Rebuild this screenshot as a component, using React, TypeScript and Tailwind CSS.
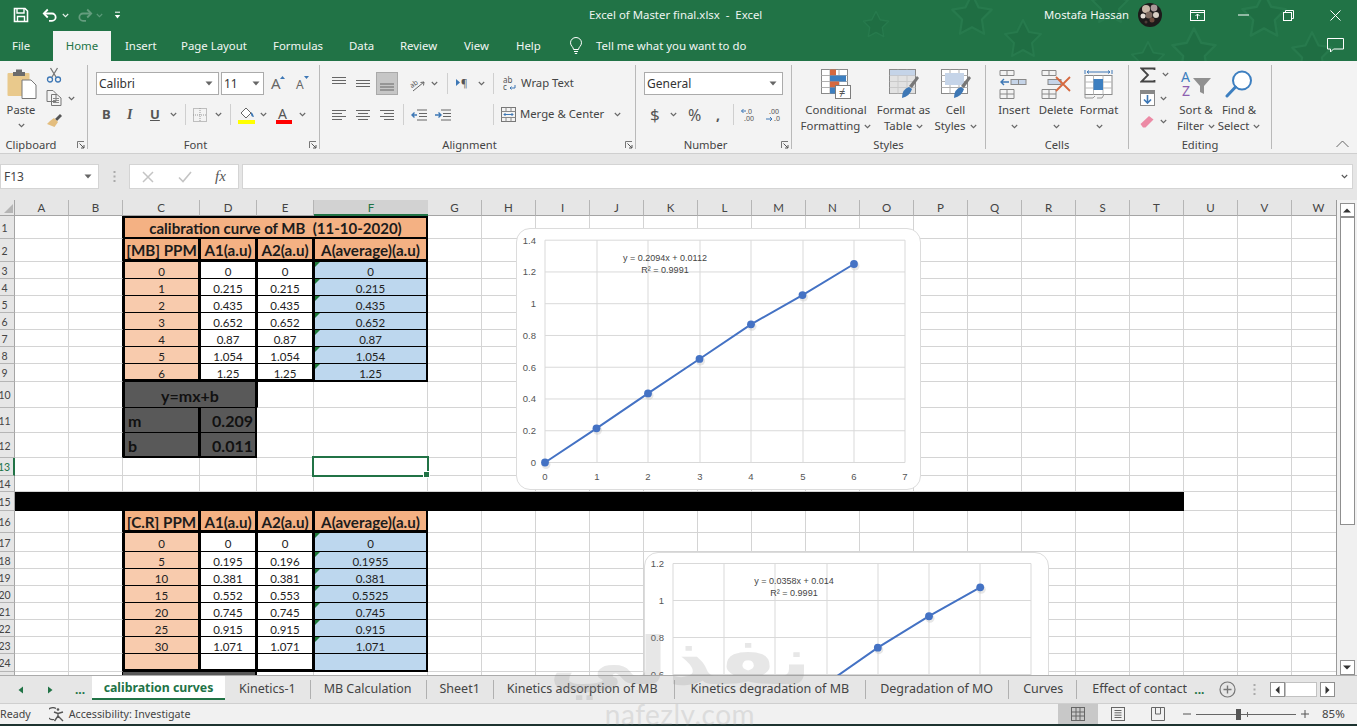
import React from "react";

function Chev({ className = "", color = "#666" }: { className?: string; color?: string }) {
  return (
    <svg width="7" height="5" viewBox="0 0 7 5" className={"shrink-0 " + className}>
      <path d="M0.8 1 L3.5 3.7 L6.2 1" fill="none" stroke={color} strokeWidth="1.1" />
    </svg>
  );
}

function DropTri({ className = "" }: { className?: string }) {
  return (
    <svg width="8" height="5" viewBox="0 0 8 5" className={"shrink-0 " + className}>
      <path d="M0.5 0.5 H7.5 L4 4.5 Z" fill="#666" />
    </svg>
  );
}

function Launcher() {
  return (
    <svg width="8" height="8" viewBox="0 0 8 8" className="absolute right-[2px] bottom-[4px]">
      <path d="M0.5 7 V0.5 H7" fill="none" stroke="#777" strokeWidth="1" />
      <path d="M2.5 2.5 L7 7 M7 4 V7 H4" fill="none" stroke="#555" strokeWidth="1" />
    </svg>
  );
}

function Sep() {
  return <div className="w-px h-[84px] bg-[#b9b9b9] shrink-0" />;
}
function SmallSep({ className = "" }: { className?: string }) {
  return <div className={"w-px h-[21px] bg-[#cfcfcf] shrink-0 " + className} />;
}

function Group({ w, label, launcher, labelClass = "", children }: { w: string; label: string; launcher?: boolean; labelClass?: string; children: React.ReactNode }) {
  return (
    <div className={"relative flex flex-col h-[88px] shrink-0 " + w}>
      <div className="flex-1 min-h-0">{children}</div>
      <div className={"h-[16px] leading-[16px] text-center text-[11.2px] text-[#444] " + labelClass}>{label}</div>
      {launcher && <Launcher />}
    </div>
  );
}

function LargeBtn({ w, icon, l1, l2, chevInline }: { w: string; icon: React.ReactNode; l1: string; l2?: string; chevInline?: boolean }) {
  return (
    <div className={"flex flex-col items-center pt-[4px] shrink-0 " + w}>
      <div className="h-[30px] flex items-center justify-center">{icon}</div>
      <div className="mt-[3px] text-[11.4px] leading-[16px] text-[#444] text-center whitespace-nowrap">{l1}</div>
      <div className="h-[16px] text-[11.4px] leading-[16px] text-[#444] flex items-center justify-center gap-[4px] whitespace-nowrap">
        {l2 && <span>{l2}</span>}
        {chevInline && <Chev />}
      </div>
    </div>
  );
}

function Lines({ kind }: { kind: "left" | "center" | "right" }) {
  const rows = kind === "left"
    ? [[0, 14], [0, 10], [0, 14], [0, 10]]
    : kind === "center"
    ? [[0, 14], [2, 12], [0, 14], [2, 12]]
    : [[0, 14], [4, 14], [0, 14], [4, 14]];
  return (
    <svg width="15" height="12" viewBox="0 0 15 12">
      {rows.map((r, i) => (
        <path key={i} d={`M${r[0]} ${1.5 + i * 3} H${r[1]}`} stroke="#666" strokeWidth="1" />
      ))}
    </svg>
  );
}

function TopLines({ y }: { y: number }) {
  return (
    <svg width="15" height="14" viewBox="0 0 15 14">
      {[0, 1, 2].map((i) => (
        <path key={i} d={`M0 ${y + i * 3} H14`} stroke="#666" strokeWidth="1" />
      ))}
    </svg>
  );
}

function Grid3({ size = 30, children }: { size?: number; children: React.ReactNode }) {
  return (
    <svg width={size} height="30" viewBox={`0 0 ${size} 30`}>
      {children}
    </svg>
  );
}

function TitleBar() {
  return (
    <div className="relative h-[30px] flex items-center shrink-0 text-white">
      <svg width="16" height="16" viewBox="0 0 16 16" className="ml-[13px]">
        <path d="M1.5 1.5 H12 L14.5 4 V14.5 H1.5 Z" fill="none" stroke="#fff" strokeWidth="1.6" />
        <path d="M4 1.5 V6 H11 V1.5" fill="none" stroke="#fff" strokeWidth="1.4" />
        <path d="M4.5 14.5 V9.5 H11.5 V14.5" fill="none" stroke="#fff" strokeWidth="1.4" />
      </svg>
      <svg width="16" height="14" viewBox="0 0 16 14" className="ml-[13px]">
        <path d="M2 5.5 H10 A3.6 3.6 0 0 1 10 12.8 H7" fill="none" stroke="#fff" strokeWidth="1.8" />
        <path d="M5.8 1.5 L1.8 5.5 L5.8 9.5" fill="none" stroke="#fff" strokeWidth="1.8" />
      </svg>
      <Chev color="#e8f2ec" className="ml-[4px]" />
      <svg width="16" height="14" viewBox="0 0 16 14" className="ml-[8px] opacity-30">
        <path d="M14 5.5 H6 A3.6 3.6 0 0 0 6 12.8 H9" fill="none" stroke="#fff" strokeWidth="1.8" />
        <path d="M10.2 1.5 L14.2 5.5 L10.2 9.5" fill="none" stroke="#fff" strokeWidth="1.8" />
      </svg>
      <Chev color="#5c9a7a" className="ml-[3px]" />
      <svg width="7" height="9" viewBox="0 0 7 9" className="ml-[11px]">
        <path d="M1 1.2 H6" stroke="#fff" strokeWidth="1" />
        <path d="M0.8 4 H6.2 L3.5 7.5 Z" fill="#fff" />
      </svg>
      <div className="absolute left-[589px] top-[7px] text-[11.4px] leading-[16px] whitespace-pre text-[#eef5f1]">Excel of Master final.xlsx  -  Excel</div>
      <div className="ml-auto flex items-center">
        <span className="text-[11.3px] text-[#f2f7f4]">Mostafa Hassan</span>
        <svg width="24" height="24" viewBox="0 0 24 24" className="ml-[9px]">
          <defs>
            <clipPath id="av"><circle cx="12" cy="12" r="12" /></clipPath>
          </defs>
          <g clipPath="url(#av)">
            <rect width="24" height="24" fill="#1d1a1a" />
            <circle cx="8" cy="6" r="4" fill="#c9b8a8" />
            <circle cx="16" cy="5" r="3.4" fill="#a99" />
            <circle cx="11" cy="12" r="3.5" fill="#7d6a60" />
            <circle cx="18" cy="12" r="3" fill="#d8cfc4" />
            <circle cx="5" cy="13" r="2.5" fill="#e4ded6" />
            <circle cx="14" cy="17" r="2.5" fill="#6b4a3c" />
            <circle cx="8" cy="19" r="1.5" fill="#4a3a36" />
          </g>
        </svg>
        <svg width="15" height="12" viewBox="0 0 15 12" className="ml-[28px]">
          <rect x="0.5" y="1.5" width="14" height="10" fill="none" stroke="#fff" />
          <path d="M1 3.5 H14" stroke="#fff" />
          <path d="M7.5 10 V5 M5.5 7 L7.5 5 L9.5 7" fill="none" stroke="#fff" />
        </svg>
        <svg width="11" height="2" viewBox="0 0 11 2" className="ml-[33px]"><path d="M0 1 H11" stroke="#fff" /></svg>
        <svg width="11" height="11" viewBox="0 0 11 11" className="ml-[34px]">
          <rect x="0.5" y="2.5" width="8" height="8" fill="none" stroke="#fff" />
          <path d="M2.5 2 V0.5 H10.5 V8.5 H9" fill="none" stroke="#fff" />
        </svg>
        <svg width="11" height="11" viewBox="0 0 11 11" className="ml-[36px] mr-[16px]">
          <path d="M0.5 0.5 L10.5 10.5 M10.5 0.5 L0.5 10.5" stroke="#fff" />
        </svg>
      </div>
    </div>
  );
}

function Stars() {
  const star = "M20 2 L26 14 L38 16 L29 25 L31 38 L20 32 L9 38 L11 25 L2 16 L14 14 Z";
  const items = [
    [950, -8, 1.1], [1003, 18, 1], [1090, -16, 1], [1170, 26, 1.2], [1240, -10, 1.2], [1290, 30, 1.1], [862, 10, 0.7], [1130, 40, 0.9],
  ];
  return (
    <svg width="520" height="61" viewBox="837 0 520 61" className="absolute right-0 top-0 pointer-events-none">
      {items.map((s, i) => (
        <g key={i} transform={`translate(${s[0]} ${s[1]}) scale(${s[2]})`}>
          <path d={star} fill="#1f6e43" stroke="#277a4d" strokeWidth="2" strokeLinejoin="round" />
        </g>
      ))}
    </svg>
  );
}

function MenuRow() {
  const tab = "text-[11.4px] text-[#f2f7f4] whitespace-nowrap leading-[16px]";
  return (
    <div className="relative h-[31px] flex items-center shrink-0">
      <span className={tab + " ml-[12px] w-[41px]"}>File</span>
      <div className="w-[58px] self-stretch mt-[1px] bg-[#f3f3f3] flex items-center justify-center text-[11.4px] text-[#217346]">Home</div>
      <span className={tab + " ml-[14px] w-[29px]"}>Insert</span>
      <span className={tab + " ml-[27px] w-[65px]"}>Page Layout</span>
      <span className={tab + " ml-[27px] w-[49px]"}>Formulas</span>
      <span className={tab + " ml-[27px] w-[24px]"}>Data</span>
      <span className={tab + " ml-[27px] w-[37px]"}>Review</span>
      <span className={tab + " ml-[27px] w-[25px]"}>View</span>
      <span className={tab + " ml-[27px] w-[25px]"}>Help</span>
      <svg width="14" height="18" viewBox="0 0 14 18" className="ml-[28px]">
        <path d="M4.5 12.5 C4.5 10 1.5 9 1.5 5.8 A5.5 5.3 0 0 1 12.5 5.8 C12.5 9 9.5 10 9.5 12.5 Z" fill="none" stroke="#fff" />
        <path d="M5 14.5 H9 M5.8 16.5 H8.2" stroke="#fff" />
      </svg>
      <span className={tab + " ml-[13px]"}>Tell me what you want to do</span>
      <svg width="17" height="15" viewBox="0 0 17 15" className="ml-auto mr-[13px]">
        <path d="M0.5 0.5 H16.5 V11 H6.5 L3.5 14 V11 H0.5 Z" fill="none" stroke="#fff" />
      </svg>
    </div>
  );
}

function ClipboardGroup() {
  return (
    <div className="flex h-full">
      <div className="w-[42px] flex flex-col items-center pt-[3px]">
        <svg width="30" height="31" viewBox="0 0 30 31" className="ml-[2px]">
          <rect x="0.5" y="5" width="22" height="23" rx="1" fill="#e9c98c" />
          <rect x="9" y="1.5" width="6" height="3" fill="#6b6b6b" />
          <rect x="6" y="4" width="12" height="4" fill="#6b6b6b" />
          <path d="M15 12 H24 L29 17 V30.5 H15 Z" fill="#fff" stroke="#777" />
        </svg>
        <div className="mt-[3px] text-[11.2px] leading-[16px] text-[#444]">Paste</div>
        <Chev className="mt-[5px]" />
      </div>
      <div className="flex flex-col pt-[2px] ml-[4px]">
        <svg width="16" height="16" viewBox="0 0 16 16">
          <path d="M4.5 1 L10 10 M11.5 1 L6 10" stroke="#777" strokeWidth="1.3" fill="none" />
          <circle cx="4" cy="12.5" r="2.5" fill="none" stroke="#3d77b5" strokeWidth="1.3" />
          <circle cx="12" cy="12.5" r="2.5" fill="none" stroke="#3d77b5" strokeWidth="1.3" />
        </svg>
        <div className="flex items-center mt-[7px]">
          <svg width="16" height="16" viewBox="0 0 16 16">
            <path d="M1 0.5 H7 L10 3.5 V11.5 H1 Z M5.5 4.5 H11 L15 8 V15.5 H5.5 Z" fill="#f3f3f3" stroke="#777" />
            <path d="M7 8.5 H13 M7 10.5 H13 M7 12.5 H13" stroke="#888" />
          </svg>
          <Chev className="ml-[6px]" />
        </div>
        <svg width="16" height="15" viewBox="0 0 16 15" className="mt-[7px]">
          <path d="M9 6 L14 1 L16 3 L11 8 Z" fill="#555" />
          <path d="M8 5 L12 9 L8.5 14 L1 11 L4 8 Z" fill="#e3bd7e" />
        </svg>
      </div>
    </div>
  );
}

function FontGroup() {
  const box = "h-[23px] bg-white border border-[#ababab] flex items-center text-[12px] text-[#333]";
  return (
    <div className="pt-[7px] pl-[8px]">
      <div className="flex">
        <div className={box + " w-[123px] pl-[2px] pr-[5px] justify-between"}>Calibri<DropTri /></div>
        <div className={box + " w-[43px] ml-[2px] pl-[2px] pr-[3px] justify-between"}>11<DropTri /></div>
        <svg width="15" height="16" viewBox="0 0 15 16" className="ml-[7px] mt-[3px] overflow-visible">
          <text x="0" y="14" fontSize="15" fill="#666" fontFamily="Noto Sans, sans-serif">A</text>
          <path d="M9 4 L11.5 1 L14 4 Z" fill="#3d77b5" />
        </svg>
        <svg width="14" height="16" viewBox="0 0 14 16" className="ml-[10px] mt-[3px] overflow-visible">
          <text x="0" y="14" fontSize="12" fill="#666" fontFamily="Noto Sans, sans-serif">A</text>
          <path d="M8 1 L13 1 L10.5 4 Z" fill="#3d77b5" />
        </svg>
      </div>
      <div className="flex items-center h-[21px] mt-[9px]">
        <span className="ml-[6px] w-[10px] text-[13px] font-bold text-[#555] leading-none">B</span>
        <span className="ml-[15px] w-[8px] text-[14px] italic font-bold text-[#555] leading-none font-['Liberation_Serif',serif]">I</span>
        <span className="ml-[15px] w-[10px] text-[13px] font-bold text-[#555] underline leading-none">U</span>
        <Chev className="ml-[10px]" />
        <SmallSep className="ml-[8px]" />
        <svg width="14" height="14" viewBox="0 0 14 14" className="ml-[7px]">
          <rect x="0.5" y="0.5" width="13" height="13" fill="none" stroke="#888" strokeDasharray="1 1" />
          <path d="M7 0 V14 M0 7 H14" stroke="#999" strokeDasharray="1 1" />
        </svg>
        <Chev className="ml-[8px]" />
        <SmallSep className="ml-[8px]" />
        <svg width="17" height="18" viewBox="0 0 17 18" className="ml-[7px]">
          <path d="M3 7 L8 2 L13 7 L8 12 Z" fill="#fff" stroke="#666" />
          <path d="M13 6 Q15 7 16 11 Q13 11 13 8 Z" fill="#3d77b5" />
          <rect x="0" y="14" width="17" height="4" fill="#ffff00" />
        </svg>
        <Chev className="ml-[5px]" />
        <svg width="16" height="18" viewBox="0 0 16 18" className="ml-[9px] overflow-visible">
          <text x="2" y="13" fontSize="14" fill="#555" fontFamily="Noto Sans, sans-serif">A</text>
          <rect x="0" y="14" width="16" height="4" fill="#ff0000" />
        </svg>
        <Chev className="ml-[7px]" />
      </div>
    </div>
  );
}

function AlignGroup() {
  return (
    <div className="pt-[7px] pl-[12px]">
      <div className="flex items-center h-[23px]">
        <TopLines y={0.5} />
        <div className="ml-[9px]"><TopLines y={3.5} /></div>
        <div className="ml-[5px] w-[22px] h-[23px] bg-[#c6c6c6] border border-[#a9a9a9] flex items-center justify-center"><TopLines y={7} /></div>
        <svg width="16" height="16" viewBox="0 0 16 16" className="ml-[12px] overflow-visible">
          <text x="0" y="9" fontSize="7" fill="#555" transform="rotate(-35 6 8)" fontFamily="Noto Sans, sans-serif">ab</text>
          <path d="M3 15 L14 6 M14 6 L10.5 6.5 M14 6 L13.5 9.5" stroke="#666" fill="none" />
        </svg>
        <Chev className="ml-[5px]" />
        <SmallSep className="ml-[9px]" />
        <svg width="15" height="12" viewBox="0 0 15 12" className="ml-[8px] overflow-visible">
          <path d="M0 1 L4 4.5 L0 8 Z" fill="#3d77b5" />
          <text x="5" y="9" fontSize="10" fill="#555" fontFamily="Noto Sans, sans-serif">¶</text>
        </svg>
        <Chev className="ml-[7px]" />
        <SmallSep className="ml-[8px]" />
        <svg width="13" height="15" viewBox="0 0 13 15" className="ml-[9px] overflow-visible">
          <text x="0" y="6.5" fontSize="8" fill="#555" fontFamily="Noto Sans, sans-serif">ab</text>
          <text x="0" y="14" fontSize="8" fill="#555" fontFamily="Noto Sans, sans-serif">c</text>
          <path d="M12 9 V12 H7 M8.5 10.5 L7 12 L8.5 13.5" fill="none" stroke="#3d77b5" />
        </svg>
        <span className="ml-[5px] text-[11.3px] text-[#444]">Wrap Text</span>
      </div>
      <div className="flex items-center h-[21px] mt-[9px]">
        <Lines kind="left" />
        <div className="ml-[9px]"><Lines kind="center" /></div>
        <div className="ml-[9px]"><Lines kind="right" /></div>
        <SmallSep className="ml-[8px]" />
        <svg width="16" height="12" viewBox="0 0 16 12" className="ml-[7px]">
          <path d="M6 1 H16 M8 4.5 H16 M8 7.5 H16 M6 11 H16" stroke="#666" />
          <path d="M6 6 H1 M3.5 3.5 L1 6 L3.5 8.5" fill="none" stroke="#3d77b5" strokeWidth="1.4" />
        </svg>
        <svg width="16" height="12" viewBox="0 0 16 12" className="ml-[8px]">
          <path d="M6 1 H16 M8 4.5 H16 M8 7.5 H16 M6 11 H16" stroke="#666" />
          <path d="M0 6 H6 M3.5 3.5 L6 6 L3.5 8.5" fill="none" stroke="#3d77b5" strokeWidth="1.4" />
        </svg>
        <SmallSep className="ml-[42px]" />
        <svg width="15" height="15" viewBox="0 0 15 15" className="ml-[7px]">
          <rect x="0.5" y="0.5" width="14" height="14" fill="none" stroke="#777" />
          <path d="M0.5 4.5 H14.5 M0.5 10.5 H14.5 M5 0.5 V4.5 M10 0.5 V4.5 M5 10.5 V14.5 M10 10.5 V14.5" stroke="#888" />
          <path d="M3 7.5 H12 M4.5 6 L3 7.5 L4.5 9 M10.5 6 L12 7.5 L10.5 9" fill="none" stroke="#3d77b5" />
        </svg>
        <span className="ml-[4px] text-[11.3px] text-[#444] whitespace-nowrap">Merge &amp; Center</span>
        <Chev className="ml-[10px]" />
      </div>
    </div>
  );
}

function NumberGroup() {
  return (
    <div className="pt-[7px] pl-[8px]">
      <div className="h-[23px] w-[139px] bg-white border border-[#ababab] flex items-center justify-between pl-[2px] pr-[5px] text-[12px] text-[#333]">General<DropTri /></div>
      <div className="flex items-center h-[21px] mt-[9px]">
        <span className="ml-[6px] w-[10px] text-[17px] leading-none text-[#555]">$</span>
        <Chev className="ml-[10px]" />
        <span className="ml-[11px] w-[14px] text-[16px] leading-none text-[#555]">%</span>
        <span className="ml-[14px] w-[4px] text-[14px] leading-none font-bold text-[#555]">,</span>
        <SmallSep className="ml-[13px]" />
        <svg width="15" height="15" viewBox="0 0 15 15" className="ml-[7px] overflow-visible">
          <text x="5" y="6.5" fontSize="7" fill="#555" fontFamily="Noto Sans, sans-serif">.0</text>
          <text x="3" y="14" fontSize="7" fill="#555" fontFamily="Noto Sans, sans-serif">.00</text>
          <path d="M5 4 H0.5 M2.5 2 L0.5 4 L2.5 6" fill="none" stroke="#3d77b5" />
        </svg>
        <svg width="15" height="15" viewBox="0 0 15 15" className="ml-[10px] overflow-visible">
          <text x="3" y="6.5" fontSize="7" fill="#555" fontFamily="Noto Sans, sans-serif">.00</text>
          <text x="8" y="14" fontSize="7" fill="#555" fontFamily="Noto Sans, sans-serif">.0</text>
          <path d="M0 12 H6 M4 10 L6 12 L4 14" fill="none" stroke="#3d77b5" />
        </svg>
      </div>
    </div>
  );
}

function SheetIcon({ children }: { children?: React.ReactNode }) {
  return (
    <>
      <rect x="0.5" y="0.5" width="26" height="24" fill="#fff" stroke="#8a8a8a" />
      <path d="M0.5 6.5 H26.5 M0.5 12.5 H26.5 M0.5 18.5 H26.5 M9 0.5 V24.5 M18 0.5 V24.5" stroke="#b0b0b0" />
      {children}
    </>
  );
}

function StylesGroup() {
  return (
    <div className="flex pl-[5px]">
      <LargeBtn
        w="w-[78px]"
        l1="Conditional"
        l2="Formatting"
        chevInline
        icon={
          <Grid3>
            <SheetIcon>
              <rect x="9" y="0.5" width="6" height="6" fill="#d6693f" />
              <rect x="9" y="6.5" width="16" height="6" fill="#3d7fc0" />
              <rect x="9" y="12.5" width="9" height="6" fill="#d6693f" />
              <rect x="9" y="18.5" width="5" height="6" fill="#3d7fc0" />
            </SheetIcon>
            <rect x="14.5" y="16.5" width="15" height="13" fill="#fff" stroke="#7d7d7d" />
            <text x="18" y="27" fontSize="11" fill="#555" fontFamily="Noto Sans, sans-serif">≠</text>
          </Grid3>
        }
      />
      <LargeBtn
        w="w-[57px]"
        l1="Format as"
        l2="Table"
        chevInline
        icon={
          <Grid3>
            <SheetIcon>
              <rect x="1" y="1" width="25" height="5.5" fill="#c5d4e8" />
              <rect x="1" y="6.5" width="25" height="18" fill="#d5d5d5" opacity="0.7" />
            </SheetIcon>
            <path d="M20 17 L28 7 L30 9 L23 19 Z" fill="#777" />
            <path d="M13 29 Q13 20 20 18 L23 20 Q21 27 13 29 Z" fill="#3d77b5" />
          </Grid3>
        }
      />
      <LargeBtn
        w="w-[47px]"
        l1="Cell"
        l2="Styles"
        chevInline
        icon={
          <Grid3>
            <SheetIcon>
              <rect x="4" y="4" width="19" height="12" fill="#c5d4e8" />
            </SheetIcon>
            <path d="M20 17 L28 7 L30 9 L23 19 Z" fill="#777" />
            <path d="M13 29 Q13 20 20 18 L23 20 Q21 27 13 29 Z" fill="#3d77b5" />
          </Grid3>
        }
      />
    </div>
  );
}

function CellsGroup() {
  return (
    <div className="flex pl-[7px]">
      <LargeBtn
        w="w-[42px]"
        l1="Insert"
        chevInline
        icon={
          <Grid3>
            <path d="M1 1.5 H15 V6.5 H1 Z M8 1.5 V6.5 M1 20.5 H15 V29.5 H1 Z M1 25 H15 M8 20.5 V29.5" fill="none" stroke="#888" />
            <rect x="12" y="10.5" width="15" height="5" fill="#c5d4e8" stroke="#888" />
            <path d="M19.5 10.5 V15.5" stroke="#888" />
            <path d="M10 13 H2 M5 10 L2 13 L5 16" fill="none" stroke="#3d77b5" strokeWidth="1.4" />
          </Grid3>
        }
      />
      <LargeBtn
        w="w-[42px]"
        l1="Delete"
        chevInline
        icon={
          <Grid3>
            <path d="M1 1.5 H15 V6.5 H1 Z M8 1.5 V6.5 M1 20.5 H15 V29.5 H1 Z M1 25 H15 M8 20.5 V29.5" fill="none" stroke="#888" />
            <rect x="7" y="10.5" width="13" height="5" fill="#c5d4e8" stroke="#888" />
            <path d="M15 8 L29 22 M29 8 L15 22" stroke="#d6693f" strokeWidth="1.8" />
          </Grid3>
        }
      />
      <LargeBtn
        w="w-[44px]"
        l1="Format"
        chevInline
        icon={
          <Grid3>
            <path d="M1 1 V5 M28 1 V5 M3 3 H26 M3 3 L5 1.5 M3 3 L5 4.5 M26 3 L24 1.5 M26 3 L24 4.5" fill="none" stroke="#3d77b5" />
            <rect x="1" y="6.5" width="27" height="19" fill="#fff" stroke="#8a8a8a" />
            <path d="M1 13 H28 M1 19 H28 M9.5 6.5 V25.5 M19 6.5 V25.5" stroke="#b8b8b8" />
            <rect x="9.5" y="10" width="9.5" height="11" fill="#3d7fc0" />
            <path d="M1 25.5 V29 H9 L11 27 M13 29 H18 L20 25.5" fill="none" stroke="#999" />
          </Grid3>
        }
      />
    </div>
  );
}

function EditingGroup() {
  return (
    <div className="flex">
      <div className="flex flex-col pl-[11px] w-[46px] pt-[1px] shrink-0">
        <div className="flex items-center h-[17px]">
          <svg width="16" height="16" viewBox="0 0 16 16">
            <path d="M14.5 3 V1.5 H1.5 L8 8 L1.5 14.5 H14.5 V13" fill="none" stroke="#444" strokeWidth="1.8" />
          </svg>
          <Chev className="ml-[6px]" />
        </div>
        <div className="flex items-center h-[16px] mt-[7px]">
          <svg width="15" height="16" viewBox="0 0 15 16">
            <rect x="0.5" y="0.5" width="14" height="15" fill="#fff" stroke="#888" />
            <rect x="0" y="0" width="15" height="4" fill="#888" />
            <path d="M7.5 5 V13 M4 9.5 L7.5 13 L11 9.5" fill="none" stroke="#3d77b5" strokeWidth="1.6" />
          </svg>
          <Chev className="ml-[5px]" />
        </div>
        <div className="flex items-center h-[14px] mt-[8px]">
          <svg width="14" height="13" viewBox="0 0 14 13">
            <path d="M0.5 9 L9 1 L13.5 4.5 L5.5 12.5 H3 Z" fill="#ec8aa5" />
          </svg>
          <Chev className="ml-[6px]" />
        </div>
      </div>
      <div className="flex">
        <LargeBtn
          w="w-[42px]"
          l1="Sort &"
          l2="Filter"
          chevInline
          icon={
            <svg width="31" height="28" viewBox="0 0 31 28" className="overflow-visible">
              <text x="0" y="12" fontSize="14" fill="#3d7fc0" fontFamily="Noto Sans, sans-serif">A</text>
              <text x="1" y="26" fontSize="14" fill="#8e5fb0" fontFamily="Noto Sans, sans-serif">Z</text>
              <path d="M12 8 H30 L23 16 V24 L19 22 V16 Z" fill="#909090" />
            </svg>
          }
        />
        <LargeBtn
          w="w-[44px]"
          l1="Find &"
          l2="Select"
          chevInline
          icon={
            <svg width="28" height="28" viewBox="0 0 28 28">
              <circle cx="17" cy="10.5" r="9" fill="#fff" stroke="#3d7fc0" strokeWidth="2" />
              <path d="M10.5 17 L2 26" stroke="#3d7fc0" strokeWidth="3" strokeLinecap="round" />
            </svg>
          }
        />
      </div>
    </div>
  );
}

function Ribbon() {
  return (
    <div className="relative h-[93px] shrink-0 bg-[#f3f3f3] border-b border-[#cfcfcf] pt-[4px] flex items-start">
      <Group w="w-[87px]" label="Clipboard" labelClass="pr-[25px]" launcher><ClipboardGroup /></Group>
      <Sep />
      <Group w="w-[231px]" label="Font" labelClass="pr-[16px]" launcher><FontGroup /></Group>
      <Sep />
      <Group w="w-[315px]" label="Alignment" labelClass="pr-[16px]" launcher><AlignGroup /></Group>
      <Sep />
      <Group w="w-[155px]" label="Number" labelClass="pr-[16px]" launcher><NumberGroup /></Group>
      <Sep />
      <Group w="w-[193px]" label="Styles"><StylesGroup /></Group>
      <Sep />
      <Group w="w-[142px]" label="Cells"><CellsGroup /></Group>
      <Sep />
      <Group w="w-[142px]" label="Editing"><EditingGroup /></Group>
      <Sep />
      <svg width="13" height="8" viewBox="0 0 13 8" className="absolute right-[8px] bottom-[5px]">
        <path d="M0.5 7 L6.5 1 L12.5 7" fill="none" stroke="#666" />
      </svg>
    </div>
  );
}

function FormulaBar() {
  return (
    <div className="h-[46px] shrink-0 bg-[#e6e6e6] flex items-start pt-[10px]">
      <div className="w-[99px] h-[25px] bg-white border border-[#d4d4d4] flex items-center justify-between pl-[3px] pr-[6px] text-[12px] text-[#444]">
        F13<DropTri />
      </div>
      <div className="w-[30px] h-[25px] flex items-center justify-center">
        <svg width="3" height="11" viewBox="0 0 3 11"><path d="M1.5 0 V11" stroke="#aaa" strokeWidth="2" strokeDasharray="2 2.5" /></svg>
      </div>
      <div className="w-[110px] h-[25px] bg-white border border-[#d4d4d4] flex items-center pl-[12px]">
        <svg width="12" height="12" viewBox="0 0 12 12"><path d="M1 1 L11 11 M11 1 L1 11" stroke="#c4c4c4" strokeWidth="1.5" /></svg>
        <svg width="14" height="12" viewBox="0 0 14 12" className="ml-[24px]"><path d="M1 6.5 L5 10.5 L13 1" fill="none" stroke="#c4c4c4" strokeWidth="1.6" /></svg>
        <span className="ml-[23px] text-[15px] italic font-['Liberation_Serif',serif] text-[#555] leading-none">fx</span>
      </div>
      <div className="ml-[3px] w-[1111px] h-[25px] bg-white border border-[#d4d4d4] flex items-center justify-end pr-[4px]">
        <Chev color="#555" />
      </div>
    </div>
  );
}

const COLS = ["A","B","C","D","E","F","G","H","I","J","K","L","M","N","O","P","Q","R","S","T","U","V","W"];
const BL = "border-r border-b border-r-[#d4d4d4] border-b-[#d4d4d4]";
const HEAD = "flex items-center justify-center font-bold text-[#1c1c1c] bg-[#f4b183] leading-none whitespace-nowrap overflow-hidden";
const NUM = "flex items-center justify-center pt-[4px] text-[11.5px] text-[#222] leading-none";
const DARK = "flex items-center bg-[#595959] pt-[2px] text-[16px] font-bold text-[#111] leading-none";

function Tri() {
  return <span className="absolute left-0 top-0 w-0 h-0 border-t-[5px] border-r-[5px] border-t-[#1f7a3a] border-r-transparent" />;
}

function RowHead({ n }: { n: number }) {
  const sel = n === 13;
  return (
    <div className={"bg-[#e6e6e6] border-b border-b-[#b5b5b5] text-[10.5px] leading-none flex items-center justify-center pt-[2px] pr-[5px] " + (sel ? "border-r-2 border-r-[#217346] text-[#217346] bg-[#d6d6d6]" : "border-r border-r-[#a5a5a5] text-[#444]")}>
      {n}
    </div>
  );
}

function Blanks({ n, from }: { n: number; from: number }) {
  return (
    <>
      {Array.from({ length: n }).map((_, i) => (
        <div key={from + i} className={BL} />
      ))}
    </>
  );
}

function DataRow({ n, c, d, e, f, last }: { n: number; c: string; d: string; e: string; f: string; last?: boolean }) {
  const bot = last ? "border-b-[3px]" : "border-b";
  return (
    <>
      <RowHead n={n} />
      <div className={BL} />
      <div className="border-b border-b-[#d4d4d4] border-r border-r-black" />
      <div className={NUM + " bg-[#f8cbad] border-l-2 border-r-2 border-black " + bot}>{c}</div>
      <div className={NUM + " bg-white border-l border-r-2 border-black " + bot}>{d}</div>
      <div className={NUM + " bg-white border-l border-r-2 border-black " + bot}>{e}</div>
      <div className={"relative " + NUM + " bg-[#bdd7ee] border-l border-r-2 border-black " + (last ? "border-b-2" : "border-b")}>
        {f !== "" && <Tri />}
        {f}
      </div>
      <Blanks n={17} from={0} />
    </>
  );
}

function HeaderRow({ n, first }: { n: number; first: string }) {
  const h = HEAD + " pt-[4px] text-[15.2px] border-r-2 border-b-[3px] border-black ";
  return (
    <>
      <RowHead n={n} />
      <div className={BL} />
      <div className="border-b border-b-[#d4d4d4] border-r border-r-black" />
      <div className={h + "border-l-2"}>{first}</div>
      <div className={h + "border-l"}>A1(a.u)</div>
      <div className={h + "border-l"}>A2(a.u)</div>
      <div className={h + "border-l"}>A(average)(a.u)</div>
      <Blanks n={17} from={0} />
    </>
  );
}

function Chart({ className, points, xs, ys, xTop, y0, yUnit, xStep, yLabels, xLabels, eq, eqX, eqY, w, h, plotB }: {
  className: string; points: [number, number][]; xs: number[]; ys: number[]; xTop: number; y0: number; yUnit: number; xStep: number;
  yLabels: string[]; xLabels: string[]; eq: string; eqX: number; eqY: number; w: number; h: number; plotB: number;
}) {
  const px = (v: number) => xTop + v * xStep;
  const py = (v: number) => y0 - v * yUnit;
  const d = points.map((p, i) => `${i ? "L" : "M"}${px(p[0])} ${py(p[1])}`).join(" ");
  const right = xs[xs.length - 1];
  const top = py(ys[ys.length - 1]);
  return (
    <div className={"absolute bg-white border border-[#dcdcdc] rounded-[14px] overflow-hidden " + className}>
      <svg width={w} height={h} viewBox={`0 0 ${w} ${h}`} fontFamily="Liberation Sans, sans-serif">
        {ys.map((v) => (
          <path key={v} d={`M${xTop} ${py(v)} H${right}`} stroke="#d9d9d9" strokeWidth="1" />
        ))}
        {xs.map((x) => (
          <path key={x} d={`M${x} ${top} V${plotB}`} stroke="#d9d9d9" strokeWidth="1" />
        ))}
        {ys.map((v, i) => (
          <text key={v} x={xTop - 9} y={py(v) + 3.5} textAnchor="end" fontSize="9.5" fill="#555">{yLabels[i]}</text>
        ))}
        {xLabels.map((t, i) => (
          <text key={t} x={xs[i]} y={plotB + 17} textAnchor="middle" fontSize="9.5" fill="#555">{t}</text>
        ))}
        <text x={eqX} y={eqY} textAnchor="middle" fontSize="9" fill="#444">{eq}</text>
        <text x={eqX} y={eqY + 12} textAnchor="middle" fontSize="9" fill="#444">R² = 0.9991</text>
        <path d={d} fill="none" stroke="#4472c4" strokeWidth="2" />
        {points.map((p, i) => (
          <g key={i}>
            <circle cx={px(p[0]) + 1} cy={py(p[1]) + 2} r="4.5" fill="#bbb" opacity="0.35" />
            <circle cx={px(p[0])} cy={py(p[1])} r="3.9" fill="#4472c4" />
          </g>
        ))}
      </svg>
    </div>
  );
}

function Sheet() {
  return (
    <div className="relative flex-1 min-h-0 flex overflow-hidden bg-white">
      <div className="relative w-[1337px] h-full overflow-hidden border-r border-r-[#9a9a9a]">
        <div className="grid grid-cols-[15px_54px_54px_77px_57px_57px_114px_54px_54px_54px_54px_54px_54px_54px_54px_54px_54px_54px_54px_54px_54px_54px_54px_54px] grid-rows-[16px_23px_23px_17px_17px_17px_17px_17px_17px_18px_26px_25px_25px_18px_16px_19px_22px_19px_17px_17px_17px_17px_17px_17px_18px_20px] font-['Lato',sans-serif]">
          <div className="relative bg-[#e6e6e6] border-r border-r-[#a5a5a5] border-b border-b-[#a5a5a5]">
            <span className="absolute left-[4px] top-[4px] w-0 h-0 border-b-[9px] border-l-[9px] border-b-[#b5b5b5] border-l-transparent" />
          </div>
          {COLS.map((c) =>
            c === "F" ? (
              <div key={c} className="bg-[#d2d2d2] border-b-2 border-b-[#217346] flex items-center justify-center pt-[1px] text-[11.5px] text-[#217346] leading-none">{c}</div>
            ) : (
              <div key={c} className="bg-[#e6e6e6] border-r border-r-[#b5b5b5] border-b border-b-[#a5a5a5] flex items-center justify-center pt-[1px] text-[11.5px] text-[#444] leading-none">{c}</div>
            )
          )}

          <RowHead n={1} />
          <div className={BL} />
          <div className="border-b border-b-[#d4d4d4] border-r border-r-black" />
          <div className={"col-span-4 " + HEAD + " pt-[2px] text-[15px] border-l-2 border-r-2 border-t-2 border-b-2 border-black whitespace-pre"}>calibration curve of MB  (11-10-2020)</div>
          <Blanks n={17} from={0} />

          <HeaderRow n={2} first="[MB] PPM" />
          <DataRow n={3} c="0" d="0" e="0" f="0" />
          <DataRow n={4} c="1" d="0.215" e="0.215" f="0.215" />
          <DataRow n={5} c="2" d="0.435" e="0.435" f="0.435" />
          <DataRow n={6} c="3" d="0.652" e="0.652" f="0.652" />
          <DataRow n={7} c="4" d="0.87" e="0.87" f="0.87" />
          <DataRow n={8} c="5" d="1.054" e="1.054" f="1.054" />
          <DataRow n={9} c="6" d="1.25" e="1.25" f="1.25" last />

          <RowHead n={10} />
          <div className={BL} />
          <div className="border-b border-b-[#d4d4d4] border-r border-r-black" />
          <div className={"col-span-2 justify-center " + DARK + " border-l-2 border-r-2 border-b border-black"}>y=mx+b</div>
          <div className="border-l border-l-black border-r border-r-[#d4d4d4] border-b border-b-[#d4d4d4]" />
          <div className={BL} />
          <Blanks n={17} from={0} />

          <RowHead n={11} />
          <div className={BL} />
          <div className="border-b border-b-[#d4d4d4] border-r border-r-black" />
          <div className={DARK + " border-l-2 border-r-2 border-b border-black pl-[3px]"}>m</div>
          <div className={DARK + " justify-end border-l border-r-2 border-b border-black pr-[2px]"}>0.209</div>
          <div className="border-r border-r-[#d4d4d4] border-b border-b-[#d4d4d4]" />
          <div className={BL} />
          <Blanks n={17} from={0} />

          <RowHead n={12} />
          <div className={BL} />
          <div className="border-b border-b-[#d4d4d4] border-r border-r-black" />
          <div className={DARK + " border-l-2 border-r-2 border-b-2 border-black pl-[3px]"}>b</div>
          <div className={DARK + " justify-end border-l border-r-2 border-b-2 border-black pr-[2px]"}>0.011</div>
          <div className="border-r border-r-[#d4d4d4] border-b border-b-[#d4d4d4]" />
          <div className={BL} />
          <Blanks n={17} from={0} />

          <RowHead n={13} />
          <Blanks n={5} from={0} />
          <div className="relative">
            <span className="absolute -left-[2px] -top-[2px] -right-[1px] -bottom-[1px] border-2 border-[#217346]" />
            <span className="absolute -right-[2px] -bottom-[2px] w-[5px] h-[5px] bg-[#217346] border border-white box-content" />
          </div>
          <Blanks n={17} from={0} />

          <RowHead n={14} />
          <Blanks n={23} from={0} />

          <RowHead n={15} />
          <div className="col-span-20 bg-black" />
          <Blanks n={3} from={0} />

          <HeaderRow n={16} first="[C.R] PPM" />
          <DataRow n={17} c="0" d="0" e="0" f="0" />
          <DataRow n={18} c="5" d="0.195" e="0.196" f="0.1955" />
          <DataRow n={19} c="10" d="0.381" e="0.381" f="0.381" />
          <DataRow n={20} c="15" d="0.552" e="0.553" f="0.5525" />
          <DataRow n={21} c="20" d="0.745" e="0.745" f="0.745" />
          <DataRow n={22} c="25" d="0.915" e="0.915" f="0.915" />
          <DataRow n={23} c="30" d="1.071" e="1.071" f="1.071" />
          <DataRow n={24} c="" d="" e="" f="" last />

          <RowHead n={25} />
          <div className={BL} />
          <div className="border-b border-b-[#d4d4d4] border-r border-r-black" />
          <div className="col-span-2 bg-[#595959] border-r-2 border-r-black" />
          <Blanks n={19} from={0} />
        </div>

        <Chart
          className="left-[516px] top-[28px] w-[405px] h-[262px]"
          w={403}
          h={260}
          points={[[0, 0], [1, 0.215], [2, 0.435], [3, 0.652], [4, 0.87], [5, 1.054], [6, 1.25]]}
          xs={[28, 80, 131, 183, 234, 286, 337, 388]}
          ys={[0, 0.2, 0.4, 0.6, 0.8, 1, 1.2, 1.4]}
          xTop={28}
          xStep={51.5}
          y0={233.5}
          yUnit={158.8}
          plotB={233.5}
          yLabels={["0", "0.2", "0.4", "0.6", "0.8", "1", "1.2", "1.4"]}
          xLabels={["0", "1", "2", "3", "4", "5", "6", "7"]}
          eq="y = 0.2094x + 0.0112"
          eqX={148}
          eqY={32}
        />
        <Chart
          className="left-[644px] top-[352px] w-[405px] h-[262px]"
          w={403}
          h={260}
          points={[[0, 0.014], [5, 0.195], [10, 0.381], [15, 0.552], [20, 0.745], [25, 0.915], [30, 1.071]]}
          xs={[28, 79, 130, 182, 233, 284, 335, 386]}
          ys={[0, 0.2, 0.4, 0.6, 0.8, 1, 1.2]}
          xTop={28}
          xStep={10.24}
          y0={232.5}
          yUnit={185}
          plotB={232.5}
          yLabels={["0", "0.2", "0.4", "0.6", "0.8", "1", "1.2"]}
          xLabels={["0", "5", "10", "15", "20", "25", "30", "35"]}
          eq="y = 0.0358x + 0.014"
          eqX={149}
          eqY={31}
        />
      </div>

      <div className="w-[20px] h-full bg-[#f0f0f0] flex flex-col items-center pt-[3px]">
        <div className="w-[15px] h-[14px] bg-white border border-[#8f8f8f] flex items-center justify-center">
          <svg width="8" height="5" viewBox="0 0 8 5"><path d="M0 4.5 L4 0.5 L8 4.5 Z" fill="#333" /></svg>
        </div>
        <div className="w-[15px] h-[308px] bg-white border border-[#8f8f8f]" />
        <div className="mt-auto w-[15px] h-[15px] bg-white border border-[#8f8f8f] flex items-center justify-center">
          <svg width="8" height="5" viewBox="0 0 8 5"><path d="M0 0.5 L8 0.5 L4 4.5 Z" fill="#333" /></svg>
        </div>
      </div>
    </div>
  );
}

function TabSep({ className = "" }: { className?: string }) {
  return <div className={"w-px h-[19px] bg-[#b0b0b0] shrink-0 " + className} />;
}

function TabBar() {
  const t = "text-[12.5px] text-[#444] whitespace-nowrap shrink-0 leading-none";
  return (
    <div className="h-[28px] shrink-0 bg-[#e6e6e6] border-t border-t-[#ababab] flex items-center overflow-hidden">
      <svg width="6" height="8" viewBox="0 0 6 8" className="ml-[18px]"><path d="M5 0.5 V7.5 L0.5 4 Z" fill="#217346" /></svg>
      <svg width="6" height="8" viewBox="0 0 6 8" className="ml-[23px]"><path d="M1 0.5 V7.5 L5.5 4 Z" fill="#217346" /></svg>
      <span className="ml-[22px] w-[12px] text-[12px] font-bold text-[#217346] leading-none">...</span>
      <div className="ml-[5px] w-[133px] self-start h-[24px] bg-white border-b-2 border-b-[#217346] pt-[3px] flex items-center justify-center text-[12.3px] font-bold text-[#217346] whitespace-nowrap">calibration curves</div>
      <span className={t + " ml-[14px]"}>Kinetics-1</span>
      <TabSep className="ml-[14px]" />
      <span className={t + " ml-[13px]"}>MB Calculation</span>
      <TabSep className="ml-[15px]" />
      <span className={t + " ml-[12px]"}>Sheet1</span>
      <TabSep className="ml-[13px]" />
      <span className={t + " ml-[13px]"}>Kinetics adsorption of MB</span>
      <TabSep className="ml-[16px]" />
      <span className={t + " ml-[16px]"}>Kinetics degradation of MB</span>
      <TabSep className="ml-[16px]" />
      <span className={t + " ml-[14px]"}>Degradation of MO</span>
      <TabSep className="ml-[15px]" />
      <span className={t + " ml-[14px]"}>Curves</span>
      <TabSep className="ml-[13px]" />
      <span className={t + " ml-[15px] w-[95px] overflow-hidden"}>Effect of contact</span>
      <span className="ml-[7px] w-[12px] text-[12px] font-bold text-[#217346] leading-none shrink-0">...</span>
      <svg width="17" height="17" viewBox="0 0 17 17" className="ml-[13px] shrink-0">
        <circle cx="8.5" cy="8.5" r="7.5" fill="none" stroke="#777" strokeWidth="1.2" />
        <path d="M8.5 4.5 V12.5 M4.5 8.5 H12.5" stroke="#777" strokeWidth="1.4" />
      </svg>
      <svg width="3" height="11" viewBox="0 0 3 11" className="ml-[17px] shrink-0"><path d="M1.5 0 V11" stroke="#aaa" strokeWidth="2" strokeDasharray="2 2.5" /></svg>
      <div className="ml-[14px] w-[15px] h-[15px] bg-white border border-[#8f8f8f] flex items-center justify-center shrink-0">
        <svg width="5" height="8" viewBox="0 0 5 8"><path d="M4.5 0 V8 L0.5 4 Z" fill="#333" /></svg>
      </div>
      <div className="w-[32px] h-[15px] bg-white border border-[#c2c2c2] shrink-0" />
      <div className="ml-[3px] w-[15px] h-[15px] bg-white border border-[#8f8f8f] flex items-center justify-center shrink-0">
        <svg width="5" height="8" viewBox="0 0 5 8"><path d="M0.5 0 V8 L4.5 4 Z" fill="#333" /></svg>
      </div>
    </div>
  );
}

function StatusBar() {
  return (
    <div className="h-[23px] shrink-0 bg-[#f1f1f1] border-t border-t-[#cfcfcf] border-b-2 border-b-[#1d3330] flex items-center text-[10.7px] text-[#444] leading-none">
      <span>Ready</span>
      <svg width="18" height="15" viewBox="0 0 18 15" className="ml-[18px]">
        <path d="M7 1.5 A6 6 0 1 0 5 12.5" fill="none" stroke="#555" strokeWidth="1.2" />
        <circle cx="9" cy="2.5" r="1.3" fill="#555" />
        <path d="M5 5 L9 6.5 L14 5 M9 6.5 V9 L5.5 14 M9 9 L14 14" fill="none" stroke="#555" strokeWidth="1.4" />
      </svg>
      <span className="ml-[2px]">Accessibility: Investigate</span>
      <div className="ml-auto flex items-center h-full">
        <div className="w-[40px] h-full bg-[#c8c8c8] flex items-center justify-center">
          <svg width="14" height="14" viewBox="0 0 14 14">
            <rect x="0.5" y="0.5" width="13" height="13" fill="none" stroke="#666" />
            <path d="M0.5 5 H13.5 M0.5 9 H13.5 M5 0.5 V13.5 M9 0.5 V13.5" stroke="#666" />
          </svg>
        </div>
        <svg width="14" height="14" viewBox="0 0 14 14" className="ml-[13px]">
          <rect x="0.5" y="0.5" width="13" height="13" fill="none" stroke="#666" />
          <path d="M3.5 3.5 H10.5 M3.5 5.8 H10.5 M3.5 8.2 H10.5 M3.5 10.5 H10.5" stroke="#666" />
        </svg>
        <svg width="14" height="14" viewBox="0 0 14 14" className="ml-[26px]">
          <path d="M0.5 13.5 V0.5 H13.5 V13.5 Z M4.5 0.5 V7 H9.5 V0.5" fill="none" stroke="#666" />
        </svg>
        <svg width="8" height="2" viewBox="0 0 8 2" className="ml-[18px]"><path d="M0 1 H8" stroke="#555" /></svg>
        <div className="ml-[5px] relative w-[100px] h-px bg-[#666]">
          <span className="absolute left-[40px] -top-[5px] w-[5px] h-[11px] bg-[#555]" />
          <span className="absolute left-[51px] -top-[2px] w-px h-[5px] bg-[#666]" />
        </div>
        <svg width="8" height="8" viewBox="0 0 8 8" className="ml-[5px]"><path d="M0 4 H8 M4 0 V8" stroke="#555" /></svg>
        <span className="ml-[13px] w-[22px] mr-[13px] text-[11.5px] whitespace-nowrap">85%</span>
      </div>
    </div>
  );
}

function Watermark() {
  return (
    <div className="absolute left-[585px] top-[628px] w-[190px] h-[98px] flex flex-col items-center pointer-events-none">
      <div dir="rtl" lang="ar" className="h-[68px] text-[66px] leading-[68px] font-bold text-[#8a8a8a] opacity-20 scale-x-[1.3] font-['DejaVu_Sans',sans-serif] whitespace-nowrap">نفذلي</div>
      <div className="mt-[5px] text-[28px] leading-[26px] text-[#8a8a8a] opacity-20 font-['Lato',sans-serif] tracking-[0.5px] whitespace-nowrap">nafezly.com</div>
    </div>
  );
}

export default function App() {
  return (
    <div className="relative w-[1357px] h-[726px] overflow-hidden flex flex-col bg-[#e6e6e6] font-['Noto_Sans',sans-serif]">
      <div className="relative bg-[#217346] h-[61px] shrink-0">
        <Stars />
        <div className="relative">
          <TitleBar />
          <MenuRow />
        </div>
      </div>
      <Ribbon />
      <FormulaBar />
      <Sheet />
      <TabBar />
      <StatusBar />
      <Watermark />
    </div>
  );
}
